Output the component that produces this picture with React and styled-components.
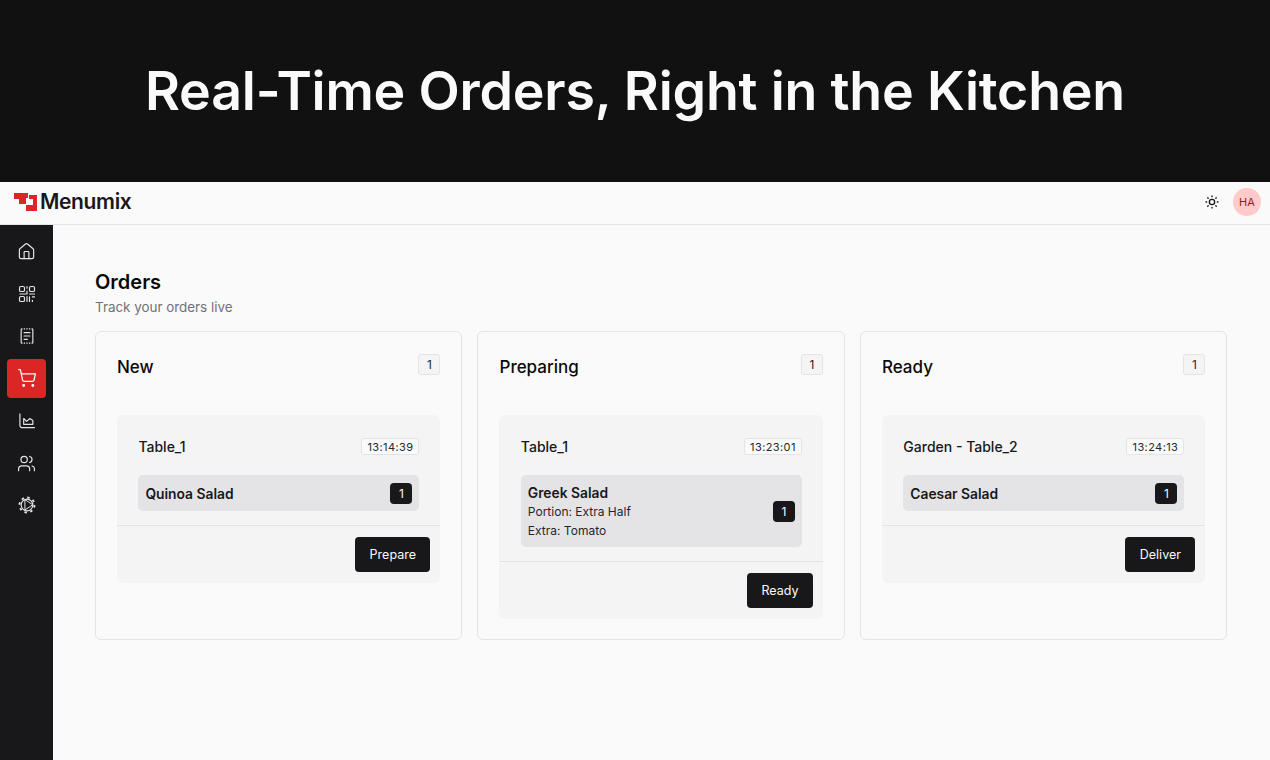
import React from 'react'
import styled, { createGlobalStyle } from 'styled-components'
import { Home, ShoppingCart, Users } from 'lucide-react'
import { TbSun } from 'react-icons/tb'

const GlobalStyle = createGlobalStyle`
    html, body {
        margin: 0;
        padding: 0;
        background: #fafafa;
    }
    * {
        box-sizing: border-box;
    }
    body {
        font-family: 'Inter', 'Liberation Sans', sans-serif;
        color: #09090b;
    }
`;

const Page = styled.div`
    display: flex;
    flex-direction: column;
    width: 100%;
    height: 760px;
    overflow: hidden;
`;

const Banner = styled.div`
    display: flex;
    align-items: center;
    justify-content: center;
    flex: 0 0 182px;
    padding-bottom: 2px;
    background: #111111;
`;

const BannerTitle = styled.h1`
    margin: 0;
    font-family: 'Inter', sans-serif;
    font-weight: 600;
    font-size: 53.7px;
    letter-spacing: -0.2px;
    color: #fafafa;
`;

const TopBar = styled.header`
    display: flex;
    align-items: center;
    justify-content: space-between;
    flex: 0 0 43px;
    padding: 0 9px 2px 14px;
    background: #fafafa;
    border-bottom: 1px solid #e4e4e7;
`;

const Logo = styled.div`
    display: flex;
    align-items: center;
    gap: 3px;
`;

const LogoText = styled.span`
    font-size: 21px;
    line-height: 24px;
    padding-bottom: 1px;
    font-weight: 600;
    letter-spacing: -0.35px;
    color: #18181b;
`;

const TopActions = styled.div`
    display: flex;
    align-items: center;
    gap: 13px;
`;

const Avatar = styled.div`
    display: flex;
    align-items: center;
    justify-content: center;
    width: 28px;
    height: 28px;
    border-radius: 50%;
    background: #fecaca;
    color: #991b1b;
    font-size: 11px;
`;

const Body = styled.div`
    display: flex;
    flex: 1;
    min-height: 0;
`;

const Sidebar = styled.nav`
    display: flex;
    flex-direction: column;
    align-items: center;
    gap: 3.33px;
    flex: 0 0 53px;
    padding-top: 7px;
    background: #18181b;
`;

const NavItem = styled.div`
    display: flex;
    align-items: center;
    justify-content: center;
    flex: 0 0 39px;
    width: 39px;
    border-radius: 4px;
    color: ${p => (p.$active ? '#fafafa' : '#e4e4e7')};
    background: ${p => (p.$active ? '#dc2626' : 'transparent')};
`;

const Main = styled.main`
    flex: 1;
    padding: 45px 42.6px 0 42px;
`;

const Title = styled.h2`
    margin: 0;
    font-size: 20px;
    line-height: 24px;
    font-weight: 600;
    color: #09090b;
`;

const Subtitle = styled.p`
    margin: 3px 0 0;
    font-size: 13.4px;
    line-height: 20px;
    color: #71717a;
`;

const Columns = styled.div`
    display: grid;
    grid-template-columns: repeat(3, 1fr);
    gap: 15px;
    margin-top: 14px;
`;

const Column = styled.section`
    height: 309px;
    padding: 22px 21px;
    border: 1px solid #e4e4e7;
    border-radius: 6px;
    background: #fafafa;
`;

const ColumnHead = styled.div`
    display: flex;
    align-items: flex-start;
    justify-content: space-between;
    height: 61px;
`;

const ColumnTitle = styled.h3`
    margin: 0;
    padding-top: 2px;
    font-size: 17px;
    line-height: 22px;
    font-weight: 500;
`;

const CountBadge = styled.span`
    display: flex;
    align-items: center;
    justify-content: center;
    width: 22px;
    height: 21px;
    border: 1px solid #e4e4e7;
    border-radius: 3px;
    background: #f4f4f5;
    font-size: 12px;
    color: #27272a;
`;

const OrderCard = styled.article`
    border-radius: 6px;
    background: #f4f4f5;
`;

const OrderBody = styled.div`
    padding: 23px 21px 14px 21.4px;
    border-bottom: 1px solid #e4e4e7;
`;

const OrderHead = styled.div`
    display: flex;
    align-items: center;
    justify-content: space-between;
    height: 17px;
    margin-bottom: 20px;
`;

const TableName = styled.span`
    font-size: 14px;
    font-weight: 500;
    color: #18181b;
`;

const TimeBadge = styled.span`
    display: flex;
    align-items: center;
    justify-content: center;
    width: 58px;
    height: 17px;
    border: 1px solid #e4e4e7;
    border-radius: 3px;
    background: #fafafa;
    font-size: 11px;
    letter-spacing: 0.4px;
    color: #27272a;
`;

const ItemRow = styled.div`
    display: flex;
    align-items: center;
    justify-content: space-between;
    min-height: 36px;
    padding: 8px 7px 7px;
    border-radius: 5px;
    background: #e4e4e7;
`;

const ItemText = styled.div`
    display: flex;
    flex-direction: column;
`;

const ItemName = styled.span`
    font-size: 13.8px;
    line-height: 20px;
    font-weight: 600;
    color: #18181b;
`;

const ItemNote = styled.span`
    font-size: 12px;
    line-height: 18.5px;
    color: #27272a;
`;

const QtyBadge = styled.span`
    display: flex;
    align-items: center;
    justify-content: center;
    width: 22px;
    height: 21px;
    border-radius: 4px;
    background: #18181b;
    color: #fafafa;
    font-size: 12px;
`;

const OrderFoot = styled.div`
    display: flex;
    justify-content: flex-end;
    padding: 11px 10px 11px 0;
`;

const ActionButton = styled.button`
    height: 35px;
    padding: 0 14.5px;
    border: none;
    border-radius: 4px;
    background: #18181b;
    color: #fafafa;
    font-family: inherit;
    font-size: 12.5px;
    font-weight: 400;
`;

function NavSvg({ children }) {
    return (
        <svg width="20" height="20" viewBox="0 0 24 24" fill="none" stroke="currentColor" strokeWidth="1.4" strokeLinecap="round" strokeLinejoin="round">
            {children}
        </svg>
    )
}

function QrIcon() {
    return (
        <NavSvg>
            <rect x="3" y="3" width="6" height="6" rx="1.6" />
            <rect x="15" y="3" width="6" height="6" rx="1.6" />
            <rect x="3" y="15" width="6" height="6" rx="1.6" />
            <path d="M12 3v2M12 8.5V12H3.5M15 12h6M12 15v6M15 15.5v5.5M18.5 15.5H21M18.5 19.5v1.5" />
        </NavSvg>
    )
}

function MenuIcon() {
    return (
        <NavSvg>
            <path d="M5 4v16M19 4v16" />
            <path d="M5 3.5h14M5 20.5h14" strokeDasharray="1.6 1.5" strokeLinecap="butt" />
            <path d="M8.5 8h7M8.5 12h7M8.5 16h4" />
        </NavSvg>
    )
}

function ChartIcon() {
    return (
        <NavSvg>
            <path d="M3.5 3.5V17a3 3 0 0 0 3 3H21" />
            <path d="M8 16V9l3.5 3.5L15.5 9 19 11.5V16Z" />
        </NavSvg>
    )
}

function GearIcon() {
    return (
        <NavSvg>
            <circle cx="12" cy="12" r="7" />
            <circle cx="12" cy="12" r="9" strokeWidth="2.2" strokeDasharray="3 4.07" strokeLinecap="butt" />
            <path d="M9.5 6V18L18.5 12Z" strokeWidth="1.2" />
        </NavSvg>
    )
}

const HomeIcon = () => <Home size={19} strokeWidth={1.5} />
const CartIcon = () => <ShoppingCart size={20} strokeWidth={1.5} />
const TeamIcon = () => <Users size={19} strokeWidth={1.5} />

const navIcons = [HomeIcon, QrIcon, MenuIcon, CartIcon, ChartIcon, TeamIcon, GearIcon]

const columns = [
    {
        title: 'New',
        table: 'Table_1',
        time: '13:14:39',
        item: 'Quinoa Salad',
        notes: [],
        action: 'Prepare',
    },
    {
        title: 'Preparing',
        table: 'Table_1',
        time: '13:23:01',
        item: 'Greek Salad',
        notes: ['Portion: Extra Half', 'Extra: Tomato'],
        action: 'Ready',
    },
    {
        title: 'Ready',
        table: 'Garden - Table_2',
        time: '13:24:13',
        item: 'Caesar Salad',
        notes: [],
        action: 'Deliver',
    },
]

function LogoMark() {
    return (
        <svg width="23" height="18" viewBox="0 0 23 18">
            <path d="M0 0H14V5H12V11H5V6H0Z" fill="#dc2626" />
            <path d="M15 2H23V18H12V12H19V6H15Z" fill="#dc2626" />
        </svg>
    )
}

function App() {
    return (
        <Page>
            <GlobalStyle />
            <Banner>
                <BannerTitle>Real-Time Orders, Right in the Kitchen</BannerTitle>
            </Banner>
            <TopBar>
                <Logo>
                    <LogoMark />
                    <LogoText>Menumix</LogoText>
                </Logo>
                <TopActions>
                    <TbSun size={16} color="#18181b" />
                    <Avatar>HA</Avatar>
                </TopActions>
            </TopBar>
            <Body>
                <Sidebar>
                    {navIcons.map((Icon, i) => (
                        <NavItem key={i} $active={i === 3}>
                            <Icon />
                        </NavItem>
                    ))}
                </Sidebar>
                <Main>
                    <Title>Orders</Title>
                    <Subtitle>Track your orders live</Subtitle>
                    <Columns>
                        {columns.map(col => (
                            <Column key={col.title}>
                                <ColumnHead>
                                    <ColumnTitle>{col.title}</ColumnTitle>
                                    <CountBadge>1</CountBadge>
                                </ColumnHead>
                                <OrderCard>
                                    <OrderBody>
                                        <OrderHead>
                                            <TableName>{col.table}</TableName>
                                            <TimeBadge>{col.time}</TimeBadge>
                                        </OrderHead>
                                        <ItemRow>
                                            <ItemText>
                                                <ItemName>{col.item}</ItemName>
                                                {col.notes.map(n => (
                                                    <ItemNote key={n}>{n}</ItemNote>
                                                ))}
                                            </ItemText>
                                            <QtyBadge>1</QtyBadge>
                                        </ItemRow>
                                    </OrderBody>
                                    <OrderFoot>
                                        <ActionButton>{col.action}</ActionButton>
                                    </OrderFoot>
                                </OrderCard>
                            </Column>
                        ))}
                    </Columns>
                </Main>
            </Body>
        </Page>
    )
}

export default App
